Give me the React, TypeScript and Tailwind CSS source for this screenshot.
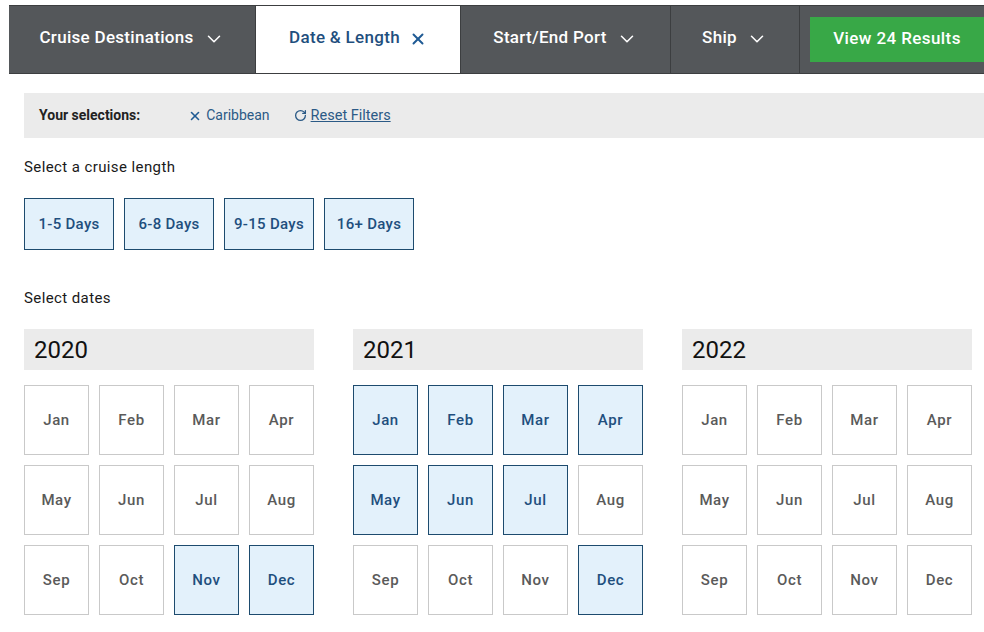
import { ChevronDown, X, RotateCw } from "lucide-react";

const MONTHS = ["Jan", "Feb", "Mar", "Apr", "May", "Jun", "Jul", "Aug", "Sep", "Oct", "Nov", "Dec"];

const YEARS = [
  { year: "2020", selected: ["Nov", "Dec"] },
  { year: "2021", selected: ["Jan", "Feb", "Mar", "Apr", "May", "Jun", "Jul", "Dec"] },
  { year: "2022", selected: [] as string[] },
];

const LENGTHS = ["1-5 Days", "6-8 Days", "9-15 Days", "16+ Days"];

function Tab({ label, width }: { label: string; width: string }) {
  return (
    <button className={`${width} h-full flex items-center justify-center gap-[9px] pb-[4px] text-white text-[17px] font-medium tracking-[0.3px]`}>
      {label}
      <ChevronDown size={22} strokeWidth={1.7} className="mt-[3px]" />
    </button>
  );
}

export default function App() {
  return (
    <div
      className="w-[984px] h-[632px] bg-white overflow-hidden"
      style={{ fontFamily: 'Roboto, "Open Sans", sans-serif' }}
    >
      {/* Top filter bar */}
      <div className="mt-[5px] ml-[9px] h-[69px] flex bg-[#54575a] border-y border-[#3c3e40]">
        <Tab label="Cruise Destinations" width="w-[246px]" />
        <button className="w-[206px] h-full bg-white border-x border-[#3c3e40] flex items-center justify-center gap-[9px] pb-[4px] text-[#1f4f7e] text-[17px] font-medium tracking-[0.3px]">
          Date &amp; Length
          <X size={18} strokeWidth={2.6} className="mt-[3px] text-[#1f5a94]" />
        </button>
        <Tab label="Start/End Port" width="w-[209px]" />
        <div className="w-[130px] h-full border-x border-[#3c3e40] flex">
          <Tab label="Ship" width="w-full" />
        </div>
        <div className="flex-1 pl-[10px] py-[11px]">
          <button className="w-full h-full bg-[#38a847] text-white text-[17px] font-medium tracking-[0.4px] flex items-center justify-center pb-[2px]">
            View 24 Results
          </button>
        </div>
      </div>

      <div className="pl-[24px]">
        {/* Selections */}
        <div className="mt-[19px] h-[45px] bg-[#ebebeb] flex items-center pl-[15px] text-[14px]">
          <span className="font-bold text-[#222]">Your selections:</span>
          <span className="ml-[48px] flex items-center gap-[4px] text-[#2b5a86]">
            <X size={14} strokeWidth={2.8} className="text-[#1f5a94]" />
            Caribbean
          </span>
          <span className="ml-[24px] flex items-center gap-[4px] text-[#2b5a86] text-[14.5px]">
            <RotateCw size={13} strokeWidth={2.4} />
            <span className="underline">Reset Filters</span>
          </span>
        </div>

        {/* Cruise length */}
        <div className="mt-[19px] text-[15px] leading-[20px] text-[#1a1a1a] tracking-[0.4px]">Select a cruise length</div>
        <div className="mt-[21px] flex gap-[10px]">
          {LENGTHS.map((l) => (
            <button
              key={l}
              className="w-[90px] h-[52px] bg-[#e3f1fb] border border-[#1d4b6e] text-[#1f4f7e] text-[15px] font-medium tracking-[0.3px]"
            >
              {l}
            </button>
          ))}
        </div>

        {/* Dates */}
        <div className="mt-[38px] text-[15px] leading-[20px] text-[#1a1a1a] tracking-[0.4px]">Select dates</div>
        <div className="mt-[21px] flex gap-[39px]">
          {YEARS.map((y) => (
            <div key={y.year} className="w-[290px]">
              <div className="h-[41px] bg-[#ebebeb] flex items-center pl-[10px] text-[24px] text-[#111]">{y.year}</div>
              <div className="mt-[15px] grid grid-cols-4 gap-[10px]">
                {MONTHS.map((m) => {
                  const sel = y.selected.includes(m);
                  return (
                    <button
                      key={m}
                      className={
                        sel
                          ? "h-[70px] bg-[#e3f1fb] border border-[#1d4b6e] text-[#1f4f7e] text-[15px] font-medium tracking-[0.6px]"
                          : "h-[70px] bg-white border border-[#c9c9c9] text-[#5a5a5a] text-[15px] font-medium tracking-[0.6px]"
                      }
                    >
                      {m}
                    </button>
                  );
                })}
              </div>
            </div>
          ))}
        </div>
      </div>
    </div>
  );
}
